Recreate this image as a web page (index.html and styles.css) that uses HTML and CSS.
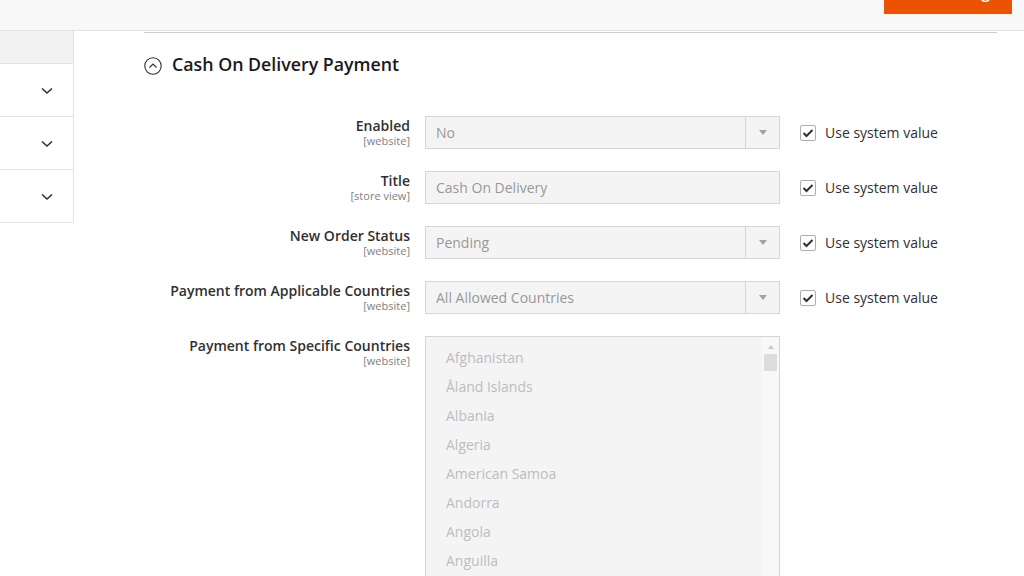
FILE: index.html
```html
<!DOCTYPE html>
<html lang="en">
<head>
<meta charset="utf-8">
<title>Cash On Delivery Payment</title>
<link rel="stylesheet" href="styles.css">
</head>
<body>
<header class="page-header">
  <div class="btn-primary"><span class="btn-label">Save Config</span></div>
</header>
<div class="layout">
  <aside class="sidebar">
    <div class="sidebar-head"></div>
    <div class="sidebar-item"><svg class="chev" width="12" height="8" viewBox="0 0 12 8"><polyline points="1,1.5 6,6 11,1.5" fill="none" stroke="#303030" stroke-width="1.6"/></svg></div>
    <div class="sidebar-item"><svg class="chev" width="12" height="8" viewBox="0 0 12 8"><polyline points="1,1.5 6,6 11,1.5" fill="none" stroke="#303030" stroke-width="1.6"/></svg></div>
    <div class="sidebar-item"><svg class="chev" width="12" height="8" viewBox="0 0 12 8"><polyline points="1,1.5 6,6 11,1.5" fill="none" stroke="#303030" stroke-width="1.6"/></svg></div>
  </aside>
  <main class="main">
    <section class="section">
      <h2 class="section-title">
        <svg class="collapse-icon" width="18" height="18" viewBox="0 0 18 18"><circle cx="9" cy="9" r="8.2" fill="none" stroke="#303030" stroke-width="1.1"/><polyline points="5.5,10.5 9,7 12.5,10.5" fill="none" stroke="#303030" stroke-width="1.2"/></svg>
        <span>Cash On Delivery Payment</span>
      </h2>

      <div class="field">
        <div class="label"><span class="label-text">Enabled</span><span class="scope">[website]</span></div>
        <div class="control select"><span class="value">No</span><span class="arrow-box"><span class="arrow"></span></span></div>
        <label class="use-default"><span class="checkbox"><svg width="12" height="10" viewBox="0 0 12 10"><polyline points="1.5,5 4.5,8 10.5,2" fill="none" stroke="#303030" stroke-width="2"/></svg></span>Use system value</label>
      </div>

      <div class="field">
        <div class="label"><span class="label-text">Title</span><span class="scope">[store view]</span></div>
        <div class="control input"><span class="value">Cash On Delivery</span></div>
        <label class="use-default"><span class="checkbox"><svg width="12" height="10" viewBox="0 0 12 10"><polyline points="1.5,5 4.5,8 10.5,2" fill="none" stroke="#303030" stroke-width="2"/></svg></span>Use system value</label>
      </div>

      <div class="field">
        <div class="label"><span class="label-text">New Order Status</span><span class="scope">[website]</span></div>
        <div class="control select"><span class="value">Pending</span><span class="arrow-box"><span class="arrow"></span></span></div>
        <label class="use-default"><span class="checkbox"><svg width="12" height="10" viewBox="0 0 12 10"><polyline points="1.5,5 4.5,8 10.5,2" fill="none" stroke="#303030" stroke-width="2"/></svg></span>Use system value</label>
      </div>

      <div class="field">
        <div class="label"><span class="label-text">Payment from Applicable Countries</span><span class="scope">[website]</span></div>
        <div class="control select"><span class="value">All Allowed Countries</span><span class="arrow-box"><span class="arrow"></span></span></div>
        <label class="use-default"><span class="checkbox"><svg width="12" height="10" viewBox="0 0 12 10"><polyline points="1.5,5 4.5,8 10.5,2" fill="none" stroke="#303030" stroke-width="2"/></svg></span>Use system value</label>
      </div>

      <div class="field">
        <div class="label"><span class="label-text">Payment from Specific Countries</span><span class="scope">[website]</span></div>
        <div class="multiselect">
          <ul class="options">
            <li>Afghanistan</li>
            <li>Åland Islands</li>
            <li>Albania</li>
            <li>Algeria</li>
            <li>American Samoa</li>
            <li>Andorra</li>
            <li>Angola</li>
            <li>Anguilla</li>
            <li>Antarctica</li>
          </ul>
          <div class="scrollbar"><span class="scroll-up"></span><span class="scroll-thumb"></span></div>
        </div>
      </div>
    </section>
  </main>
</div>
</body>
</html>
```

FILE: styles.css
```css
* { box-sizing: border-box; }
html, body { margin: 0; padding: 0; }
body {
  width: 1024px;
  height: 576px;
  overflow: hidden;
  background: #ffffff;
  font-family: "Open Sans", "DejaVu Sans", sans-serif;
  color: #303030;
}

.page-header {
  height: 31px;
  background: #f8f8f8;
  border-bottom: 1px solid #e3e3e3;
  display: flex;
  justify-content: flex-end;
  padding-right: 12px;
}
.btn-primary {
  width: 128px;
  height: 14px;
  background: #eb5202;
  overflow: hidden;
  display: flex;
  justify-content: flex-start;
  align-items: flex-start;
  padding-left: 17px;
}
.btn-label {
  margin-top: -18px;
  font-size: 16px;
  line-height: 20px;
  font-weight: 600;
  color: #ffffff;
  white-space: nowrap;
}

.layout {
  display: flex;
  align-items: flex-start;
}

.sidebar {
  width: 74px;
  border-right: 1px solid #e3e3e3;
  flex: none;
}
.sidebar-head {
  height: 33px;
  background: #f1f1f1;
  border-bottom: 1px solid #e3e3e3;
}
.sidebar-item {
  height: 53px;
  border-bottom: 1px solid #e3e3e3;
  display: flex;
  align-items: center;
  justify-content: flex-end;
  padding-right: 20px;
  padding-top: 1px;
}

.main {
  flex: 1;
  padding: 1px 27px 0 70px;
}
.section {
  border-top: 1px solid #cccccc;
}
.section-title {
  margin: 19px 0 0 0;
  display: flex;
  align-items: center;
  gap: 10px;
  font-size: 17.8px;
  line-height: 24px;
  font-weight: 600;
  color: #1a1a1a;
}
.collapse-icon { margin-top: 3px; flex: none; }

.field {
  display: grid;
  grid-template-columns: 266px 355px auto;
  column-gap: 15px;
  align-items: start;
  margin-top: 22px;
}
.section-title + .field { margin-top: 40px; }

.label {
  display: flex;
  flex-direction: column;
  align-items: flex-end;
  text-align: right;
  padding-top: 1px;
}
.label-text {
  font-size: 14px;
  line-height: 18px;
  font-weight: 600;
  color: #303030;
}
.scope {
  margin-top: -1px;
  font-size: 11px;
  line-height: 13px;
  color: #808080;
}

.control {
  height: 33px;
  background: #f4f4f4;
  border: 1px solid #d6d6d6;
  display: flex;
  align-items: center;
  font-size: 14px;
  color: #989898;
}
.value {
  flex: 1;
  padding-left: 10px;
}
.arrow-box {
  width: 34px;
  height: 100%;
  border-left: 1px solid #d6d6d6;
  display: flex;
  align-items: center;
  justify-content: center;
}
.arrow {
  width: 0;
  height: 0;
  border-left: 4.5px solid transparent;
  border-right: 4.5px solid transparent;
  border-top: 5px solid #a3a3a3;
  margin-left: 1px;
}

.use-default {
  display: flex;
  align-items: center;
  gap: 9px;
  margin-left: 5px;
  height: 33px;
  font-size: 14px;
  color: #303030;
}
.checkbox {
  width: 16px;
  height: 16px;
  border: 1px solid #adadad;
  border-radius: 2px;
  background: #ffffff;
  display: flex;
  align-items: center;
  justify-content: center;
}

.multiselect {
  height: 260px;
  background: #f4f4f4;
  border: 1px solid #d6d6d6;
  display: flex;
}
.options {
  flex: 1;
  list-style: none;
  margin: 0;
  padding: 6px 0 0 20px;
  font-size: 14px;
  color: #bdbdbd;
}
.options li {
  height: 29px;
  line-height: 29px;
}
.scrollbar {
  width: 17px;
  background: #f8f8f8;
  display: flex;
  flex-direction: column;
  align-items: center;
  padding-top: 8px;
}
.scroll-up {
  width: 0;
  height: 0;
  border-left: 3.5px solid transparent;
  border-right: 3.5px solid transparent;
  border-bottom: 4px solid #c8c8c8;
}
.scroll-thumb {
  width: 13px;
  height: 17px;
  margin-top: 5px;
  background: #dcdcdc;
}
```
